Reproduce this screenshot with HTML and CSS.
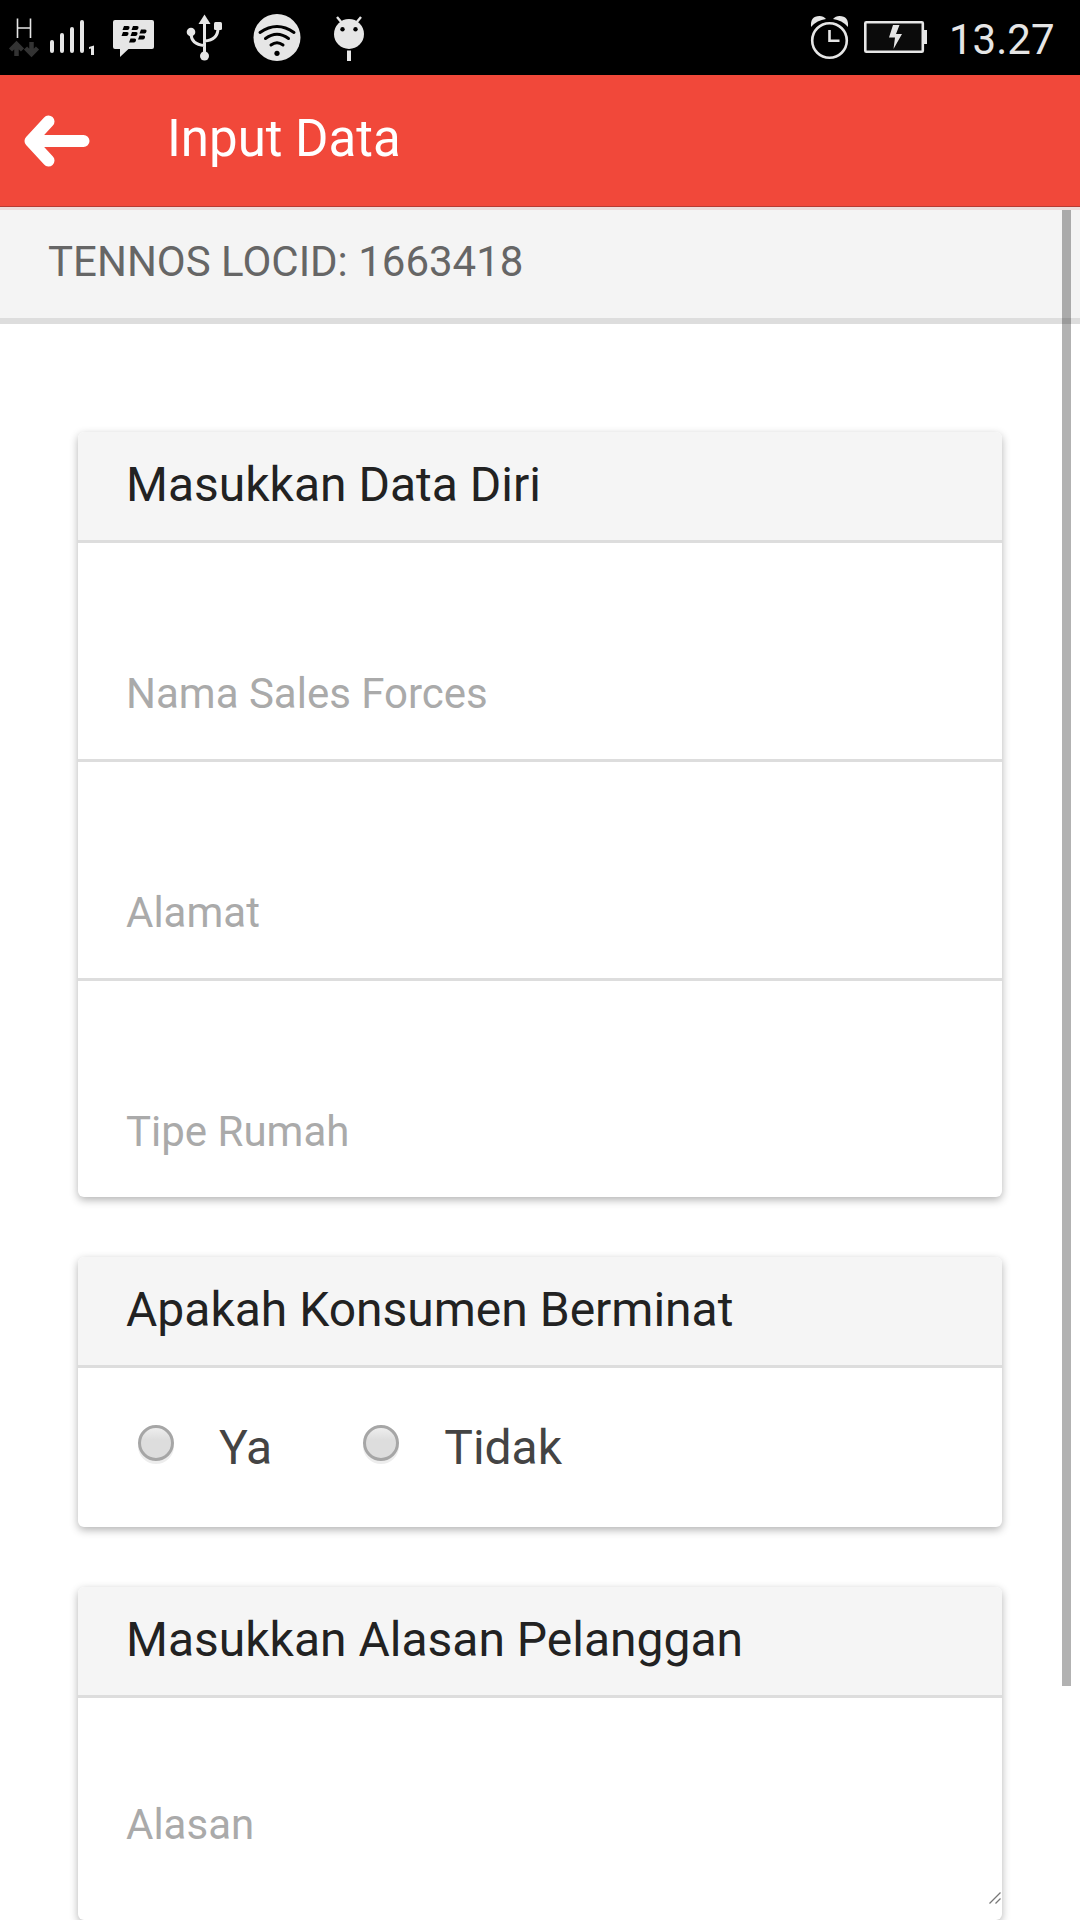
FILE: index.html
```html
<!DOCTYPE html>
<html lang="id">
<head>
<meta charset="utf-8">
<title>Input Data</title>
<link rel="stylesheet" href="styles.css">
</head>
<body>
<div class="screen">
  <div class="status">
    <svg class="status-icons" width="380" height="75" viewBox="0 0 380 75" fill="#e6e6e6">
      <path d="M17.5 18.500v19.500M30.500 18.500v19.500M17.500 28h13" stroke="#e6e6e6" stroke-width="1.600" fill="none"/>
      <g stroke="#333" stroke-width="4.500" fill="none" stroke-linejoin="miter"><path d="M16.500 56V44.500M10.500 50l6-6 6 6M31.500 42v12M25.500 48l6 6 6-6"/></g>
      <path d="M52 42v9M62 35v16M72 29v22M82 22v29" stroke="#e6e6e6" stroke-width="4" stroke-linecap="round" fill="none"/>
      <path d="M94 45.500v9.500h-3v-6.500l-2 .5v-2z"/>
      <path d="M115 20h37q2 0 2 2v25q0 2-2 2h-23.500l-8.500 8v-8h-5q-2 0-2-2V22q0-2 2-2z"/>
      <g fill="#000"><path d="M124 26h4q2 0 1.500 2t-2 2h-5zM133 26h4q2 0 1.500 2t-2 2h-5zM123 32h4q2 0 1.500 2t-2 2h-5zM132 32h4q2 0 1.500 2t-2 2h-5zM141 29.500h4q2 0 1.500 2t-2 2h-5zM139.500 35.500h4q2 0 1.500 2t-2 2h-5zM130.500 38.500h4q2 0 1.500 2t-2 2h-5z"/></g>
      <g><path d="M204.500 14.500l6 9.500h-12z"/><circle cx="191" cy="32" r="4.300"/><rect x="214" y="22" width="8" height="8" rx="1.500"/><circle cx="204.500" cy="56" r="4.500"/>
      <path d="M204.500 22v34M191 33c0 8 5 12 13.500 12.500M218 28c0 8-4 12.500-13.500 13" stroke="#e6e6e6" stroke-width="3" fill="none"/></g>
      <circle cx="277" cy="37.500" r="23.500"/>
      <path d="M260 32.500q17-12 34 0M265.500 38.500q11.500-8.500 23 0M271 45q6-4.500 12 0" stroke="#000" stroke-width="3" stroke-linecap="round" fill="none"/>
      <circle cx="277" cy="53.300" r="2.600" fill="#000"/>
      <circle cx="349" cy="34" r="15"/>
      <path d="M337 17l5 6M361 17l-5 6" stroke="#e6e6e6" stroke-width="2.400"/>
      <circle cx="342.500" cy="29.300" r="2.200" fill="#000"/><circle cx="355.500" cy="29.300" r="2.200" fill="#000"/>
      <rect x="347" y="50.500" width="4" height="10.500"/>
    </svg>
    <div class="status-right">
      <svg width="120" height="75" viewBox="808 0 120 75" fill="#e6e6e6">
        <circle cx="829.500" cy="40.500" r="17.300" fill="none" stroke="#e6e6e6" stroke-width="2.600"/>
        <path d="M829.500 30v10.800h10" fill="none" stroke="#e6e6e6" stroke-width="2.600"/>
        <path d="M811 27q-1-11 8.500-11 4 0 6.500 3-9 1-15 8zM848 27q1-11-8.500-11-4 0-6.500 3 9 1 15 8z"/>
        <rect x="865.300" y="22.300" width="57.500" height="29.500" rx="1" fill="#0b0b0b" stroke="#e6e6e6" stroke-width="2.600"/>
        <path d="M924 30h3v14h-3zM893 25h6.500l-3.500 9h6l-8.500 15 1.500-11.500h-6z"/>
      </svg>
      <span class="clock">13.27</span>
    </div>
  </div>
  <header class="topbar">
    <svg class="back" width="67" height="54" viewBox="0 0 67 54"><path d="M25 7L7 26.500 25 46M7 26.500h53" transform="translate(.5 .5)" fill="none" stroke="#fff" stroke-width="12" stroke-linecap="round" stroke-linejoin="round"/></svg>
    <h1 class="title">Input Data</h1>
  </header>
  <div class="locid">TENNOS LOCID: 1663418</div>
  <main class="content">
    <section class="card">
      <h2 class="card-head">Masukkan Data Diri</h2>
      <div class="field">Nama Sales Forces</div>
      <div class="field">Alamat</div>
      <div class="field">Tipe Rumah</div>
    </section>
    <section class="card">
      <h2 class="card-head">Apakah Konsumen Berminat</h2>
      <div class="choices">
        <label class="choice"><i class="radio"></i>Ya</label>
        <label class="choice"><i class="radio"></i>Tidak</label>
      </div>
    </section>
    <section class="card">
      <h2 class="card-head">Masukkan Alasan Pelanggan</h2>
      <div class="area">Alasan
        <svg class="grip" width="12" height="12" viewBox="0 0 12 12"><path d="M.5 11.500l11-11M6.500 11.500l5-5" stroke="#777" stroke-width="1.300"/></svg>
      </div>
    </section>
  </main>
  <div class="scrollbar"></div>
</div>
</body>
</html>
```
FILE: styles.css
```css
* { box-sizing: border-box; }
body { margin: 0; background: #fff; font-family: Roboto, "Liberation Sans", sans-serif; }
h1, h2 { margin: 0; font-weight: 400; }
svg { display: block; flex: none; }
.screen { position: relative; width: 1080px; height: 1920px; overflow: hidden; background: #fff; }
.status { height: 75px; background: #000; display: flex; justify-content: space-between; }
.status-right { display: flex; gap: 21px; width: 272px; color: #e6e6e6; }
.clock { font-size: 42px; line-height: 79px; white-space: nowrap; }
.topbar { height: 135px; padding: 0 0 5px 23px; display: flex; align-items: center; background: #f1483a; border-bottom: 3px solid #eddcdb; box-shadow: inset 0 -1px #b73a32; color: #fff; }
.back { margin-top: 4px; }
.title { margin-left: 77px; font-size: 51px; line-height: 60px; }
.locid { height: 114px; padding: 0 48px 5px; display: flex; align-items: center; background: #f4f4f4; border-bottom: 6px solid #ddd; color: #666; font-size: 42px; }
.content { padding: 108px 78px 0; display: flex; flex-direction: column; gap: 60px; }
.card { background: #fff; border-radius: 6px; box-shadow: 0 3px 9px rgba(0, 0, 0, .3); }
.card-head { height: 111px; padding: 0 48px 3px; display: flex; align-items: center; background: #f5f5f5; border-bottom: 3px solid #ddd; border-radius: 6px 6px 0 0; font-size: 48px; color: #222; }
.field { height: 219px; padding: 0 48px 41px; display: flex; align-items: flex-end; border-bottom: 3px solid #ddd; color: #aaa; font-size: 42px; line-height: 49px; }
.field:last-child { height: 216px; border-bottom: 0; }
.choices { height: 159px; padding-left: 60px; display: flex; align-items: center; gap: 91px; font-size: 48px; color: #444; }
.choice { display: flex; align-items: center; gap: 45px; }
.radio { width: 36px; height: 36px; margin-bottom: 9px; border: 3px solid #a6a6a6; border-radius: 50%; background: linear-gradient(#eee, #ddd 40%, #ddd); box-shadow: 0 3px #ededed; }
.area { position: relative; height: 222px; padding: 102px 48px 0; color: #aaa; font-size: 42px; line-height: 49px; }
.grip { position: absolute; right: 1px; bottom: 16px; }
.scrollbar { position: absolute; left: 1062px; top: 210px; width: 9px; height: 1476px; background: rgba(0, 0, 0, .3); }
```
